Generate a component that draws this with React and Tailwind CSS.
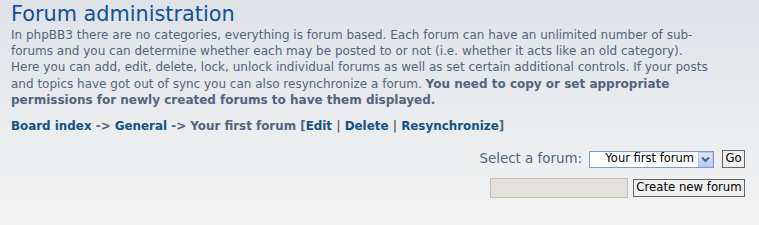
import React from "react";

export default function App() {
  return (
    <div className="w-[759px] h-[225px] overflow-hidden bg-gradient-to-b from-[#dfe3e8] to-[#f3f3f3] text-[#536482] pl-[11px]" style={{ fontFamily: '"DejaVu Sans", Verdana, sans-serif' }}>
      <h1 className="text-[20.8px] leading-[26px] text-[#115098] pt-[1px] -mb-[1px]">Forum administration</h1>
      <p className="text-[12px] leading-[16.2px] mt-[1px] whitespace-nowrap">
        In phpBB3 there are no categories, everything is forum based. Each forum can have an unlimited number of sub-<br />
        forums and you can determine whether each may be posted to or not (i.e. whether it acts like an old category).<br />
        Here you can add, edit, delete, lock, unlock individual forums as well as set certain additional controls. If your posts<br />
        and topics have got out of sync you can also resynchronize a forum. <b>You need to copy or set appropriate</b><br />
        <b>permissions for newly created forums to have them displayed.</b>
      </p>
      <div className="text-[11.9px] leading-[16px] font-bold mt-[10px]">
        <span className="text-[#105289]">Board index</span> -&gt; <span className="text-[#105289]">General</span> -&gt; Your first forum [<span className="text-[#105289]">Edit</span> | <span className="text-[#105289]">Delete</span> | <span className="text-[#105289]">Resynchronize</span>]
      </div>
      <div className="flex justify-end items-center mt-[15px] pr-[14px]">
        <span className="mr-[7px] text-[13.4px]">Select a forum:</span>
        <div className="flex items-center h-[17px] w-[125px] border border-[#7f9db9] bg-white text-[11.5px] text-black">
          <span className="flex-1 text-right pr-[4px] leading-none">Your first forum</span>
          <span className="w-[15px] h-[15px] bg-gradient-to-b from-[#dce6f9] to-[#b9cdf3] border border-[#b4c8f0] flex items-center justify-center">
            <svg width="9" height="7" viewBox="0 0 9 7"><path d="M1 1.5 L4.5 5 L8 1.5" stroke="#4d6185" strokeWidth="2" fill="none" /></svg>
          </span>
        </div>
        <button className="ml-[8px] h-[18px] w-[23px] border border-[#666] bg-[#efefef] text-[11.7px] text-black leading-none">Go</button>
      </div>
      <div className="flex justify-end items-center mt-[9px] pr-[14px]">
        <div className="w-[138px] h-[20px] border border-[#c2bfb8] bg-[#e4e1dc]"></div>
        <button className="ml-[5px] h-[18px] w-[112px] border border-[#666] bg-[#efefef] text-[11.7px] text-black leading-none">Create new forum</button>
      </div>
    </div>
  );
}
